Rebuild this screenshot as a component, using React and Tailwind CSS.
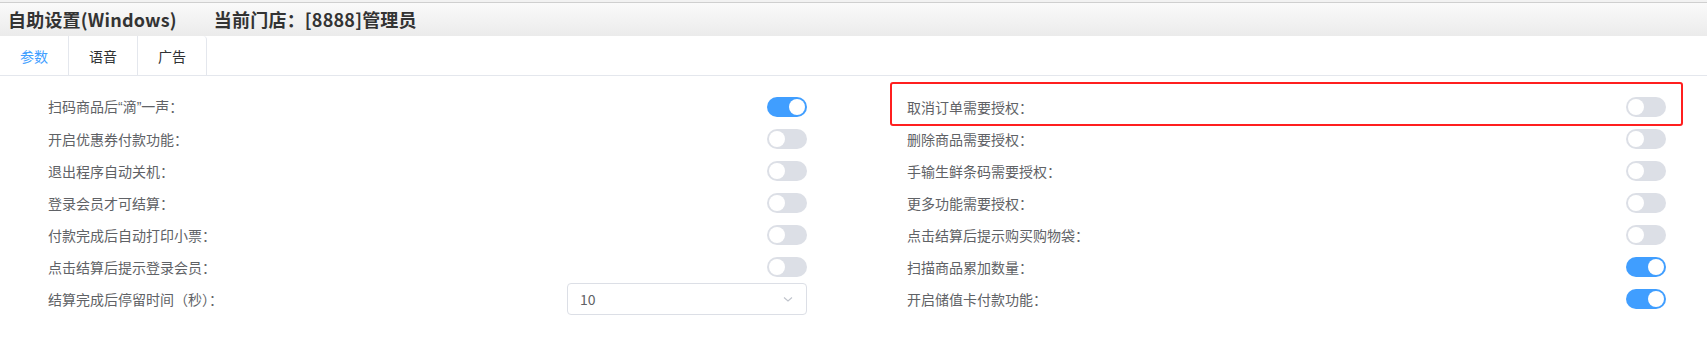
import React, { useState } from "react";

const Quote = ({ children }) => (
  <span style={{ fontFamily: '"Liberation Sans", sans-serif' }}>{children}</span>
);

const leftItems = [
  {
    key: "beep",
    label: (
      <>
        扫码商品后<Quote>“</Quote>滴<Quote>”</Quote>一声：
      </>
    ),
    on: true,
  },
  { key: "coupon", label: "开启优惠券付款功能：", on: false },
  { key: "shutdown", label: "退出程序自动关机：", on: false },
  { key: "member", label: "登录会员才可结算：", on: false },
  { key: "print", label: "付款完成后自动打印小票：", on: false },
  { key: "login", label: "点击结算后提示登录会员：", on: false },
];

const rightItems = [
  { key: "cancel", label: "取消订单需要授权：", on: false, marked: true },
  { key: "delete", label: "删除商品需要授权：", on: false },
  { key: "fresh", label: "手输生鲜条码需要授权：", on: false },
  { key: "more", label: "更多功能需要授权：", on: false },
  { key: "bag", label: "点击结算后提示购买购物袋：", on: false },
  { key: "sum", label: "扫描商品累加数量：", on: true },
  { key: "card", label: "开启储值卡付款功能：", on: true },
];

const tabs = ["参数", "语音", "广告"];

// 开关
const Switch = ({ checked, onChange }) => (
  <button
    onClick={onChange}
    className={`relative w-[40px] h-[20px] rounded-full transition ${
      checked ? "bg-[#409eff]" : "bg-[#dcdfe6]"
    }`}
  >
    <span
      className={`absolute top-[2px] w-[16px] h-[16px] rounded-full bg-white transition-all ${
        checked ? "left-[22px]" : "left-[2px]"
      }`}
    />
  </button>
);

const Row = ({ label, children, marked }) => (
  <div className="relative h-[32px] flex items-center justify-between">
    <span className="text-[14px] text-[#606266]">{label}</span>
    {children}
    {marked && (
      <div className="absolute left-[-17px] right-[-17px] top-[-9px] bottom-[-3px] border-2 border-[#ff1f1f] rounded-[3px] pointer-events-none" />
    )}
  </div>
);

const App = () => {
  const [activeTab, setActiveTab] = useState(0);
  const [left, setLeft] = useState(leftItems);
  const [right, setRight] = useState(rightItems);

  const toggle = (list, setList, i) =>
    setList(list.map((it, idx) => (idx === i ? { ...it, on: !it.on } : it)));

  return (
    <div
      className="w-[1707px] h-[359px] bg-white overflow-hidden"
      style={{ fontFamily: '"Noto Sans CJK SC", "Noto Sans", sans-serif' }}
    >
      {/* 상단 헤더 */}
      <div className="h-[3px] bg-[#f2f2f2] border-b border-[#cfcfcf]" />
      <div className="h-[33px] bg-gradient-to-b from-[#fafafa] to-[#ebebeb] flex items-center pl-[8px] gap-[37px] text-[18px] font-bold text-[#333333] tracking-[0.2px]">
        <span>自助设置(Windows)</span>
        <span>当前门店：[8888]管理员</span>
      </div>

      {/* 탭 */}
      <div className="h-[40px] flex border-b border-[#e4e7ed]">
        <div className="flex border-r border-[#e4e7ed] rounded-tr-[4px]">
          {tabs.map((t, i) => (
            <button
              key={t}
              onClick={() => setActiveTab(i)}
              className={`px-[20px] h-[40px] text-[14px] ${
                i > 0 ? "border-l border-[#e4e7ed]" : ""
              } ${activeTab === i ? "text-[#409eff]" : "text-[#303133]"}`}
            >
              {t}
            </button>
          ))}
        </div>
      </div>

      {/* 설정 목록 */}
      <div className="pt-[15px] pl-[48px] grid grid-cols-[759px_759px] gap-x-[100px]">
        <div>
          {left.map((it, i) => (
            <Row key={it.key} label={it.label}>
              <Switch checked={it.on} onChange={() => toggle(left, setLeft, i)} />
            </Row>
          ))}
          <Row label="结算完成后停留时间（秒）：">
            <div className="w-[240px] h-[32px] border border-[#dcdfe6] rounded-[4px] flex items-center justify-between pl-[12px] pr-[12px]">
              <span className="text-[14px] text-[#606266]">10</span>
              <svg width="12" height="12" viewBox="0 0 12 12" fill="none">
                <path d="M2 4.5 L6 8 L10 4.5" stroke="#c0c4cc" strokeWidth="1.1" />
              </svg>
            </div>
          </Row>
        </div>
        <div>
          {right.map((it, i) => (
            <Row key={it.key} label={it.label} marked={it.marked}>
              <Switch checked={it.on} onChange={() => toggle(right, setRight, i)} />
            </Row>
          ))}
        </div>
      </div>
    </div>
  );
};

export default App;
